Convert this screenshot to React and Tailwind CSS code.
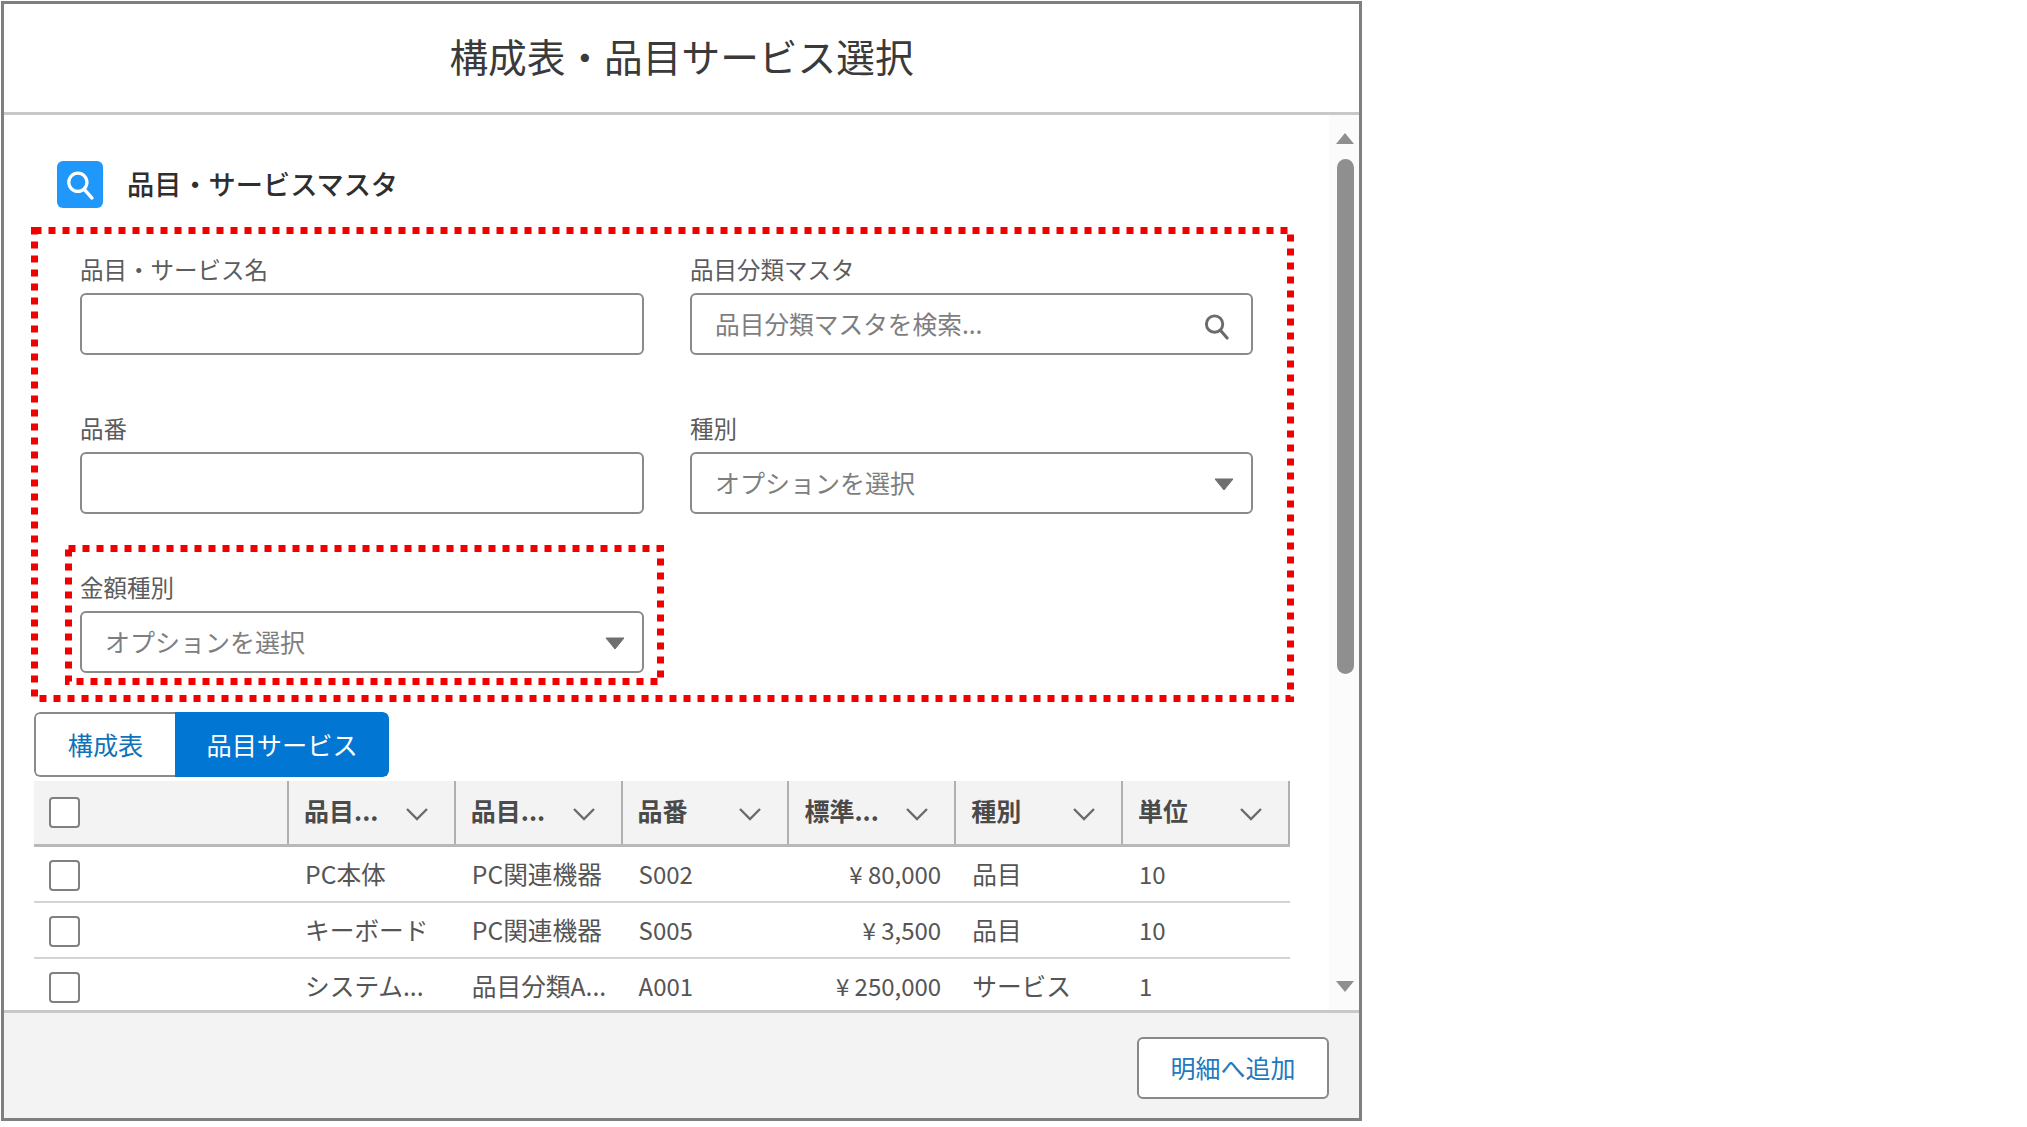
const rows = [
  { name: "PC本体", group: "PC関連機器", code: "S002", price: "¥ 80,000", kind: "品目", unit: "10" },
  { name: "キーボード", group: "PC関連機器", code: "S005", price: "¥ 3,500", kind: "品目", unit: "10" },
  { name: "システム...", group: "品目分類A...", code: "A001", price: "¥ 250,000", kind: "サービス", unit: "1" },
];

const columns = ["品目...", "品目...", "品番", "標準...", "種別", "単位"];

function Chevron() {
  return (
    <svg width="24" height="14" viewBox="0 0 24 14" fill="none" className="shrink-0 mt-[3px]">
      <path d="M2 2 L12 12 L22 2" stroke="#6b6b6b" strokeWidth="2.4" />
    </svg>
  );
}

function Caret() {
  return (
    <svg width="20" height="13" viewBox="0 0 20 13" className="shrink-0 mt-[3px]">
      <path d="M1 1 H19 L10 12 Z" fill="#6f6f6f" stroke="#6f6f6f" strokeWidth="1" strokeLinejoin="round" />
    </svg>
  );
}

function Magnifier({ size, color, className }) {
  return (
    <svg width={size} height={size} viewBox="0 0 28 28" fill="none" className={className}>
      <circle cx="12" cy="11.5" r="8.5" stroke={color} strokeWidth="3" />
      <path d="M18 18 L25 26" stroke={color} strokeWidth="3.2" strokeLinecap="round" />
    </svg>
  );
}

function Checkbox() {
  return <div className="w-[31px] h-[31px] bg-white border-2 border-[#808080] rounded-[4px]" />;
}

function DottedBox({ className }) {
  return (
    <svg className={`absolute pointer-events-none overflow-visible ${className}`}>
      <rect
        x="3.5"
        y="3.5"
        fill="none"
        stroke="#f20000"
        strokeWidth="7"
        strokeDasharray="7 7"
        style={{ width: "calc(100% - 7px)", height: "calc(100% - 7px)" }}
      />
    </svg>
  );
}

function Field({ label, children }) {
  return (
    <div className="flex flex-col">
      <label className="h-[30px] mb-[9px] text-[23.5px] leading-[30px] text-[#5c5c5c]">{label}</label>
      {children}
    </div>
  );
}

function TextInput({ placeholder, icon }) {
  return (
    <div className="h-[62px] flex items-center bg-white border-2 border-[#8a8a8a] rounded-[6px] pl-[23px] pr-[21px]">
      <input
        placeholder={placeholder}
        className="flex-1 min-w-0 bg-transparent outline-none text-[24.7px] placeholder:text-[#7e7e7e]"
      />
      {icon}
    </div>
  );
}

function SelectBox() {
  return (
    <div className="h-[62px] flex items-center justify-between bg-white border-2 border-[#8a8a8a] rounded-[6px] pl-[23px] pr-[17px]">
      <span className="text-[25px] text-[#7e7e7e]">オプションを選択</span>
      <Caret />
    </div>
  );
}

export default function App() {
  return (
    <div className="w-screen h-screen overflow-hidden bg-white pl-px pt-px font-['Noto_Sans_CJK_JP',sans-serif]">
      <div className="w-[1361px] h-[1120px] flex flex-col border-[3px] border-[#7f7f7f] bg-white">
        <header className="h-[111px] shrink-0 flex items-center justify-center border-b-[3px] border-[#c8c8c8] pb-[6px]">
          <h1 className="text-[38.7px] leading-none text-[#3a3a3a]">構成表・品目サービス選択</h1>
        </header>

        <div className="flex-1 min-h-0 flex overflow-hidden">
          <div className="flex-1 min-w-0 pl-[28px]">
            <div className="flex items-center mt-[46px] ml-[25px] gap-[24px]">
              <div className="w-[46px] h-[47px] flex items-center justify-center rounded-[6px] bg-[#1f97fb]">
                <Magnifier size={30} color="#fff" />
              </div>
              <h2 className="text-[27.2px] font-medium text-[#2e2e2e] -mt-[3px]">品目・サービスマスタ</h2>
            </div>

            <div className="relative w-[1263px] h-[475px] -ml-px mt-[19px] pl-[49px] pt-[27px]">
              <DottedBox className="inset-0 w-full h-full" />
              <div className="grid grid-cols-[564px_563px] gap-x-[46px] gap-y-[58px]">
                <Field label="品目・サービス名">
                  <TextInput />
                </Field>
                <Field label="品目分類マスタ">
                  <TextInput
                    placeholder="品目分類マスタを検索..."
                    icon={<Magnifier size={27} color="#6b6b6b" className="shrink-0 mt-[5px]" />}
                  />
                </Field>
                <Field label="品番">
                  <TextInput />
                </Field>
                <Field label="種別">
                  <SelectBox />
                </Field>
                <div className="relative">
                  <DottedBox className="-left-[15px] -top-[27px] w-[599px] h-[140px]" />
                  <Field label="金額種別">
                    <SelectBox />
                  </Field>
                </div>
              </div>
            </div>

            <div className="flex w-[355px] h-[65px] mt-[10px] ml-[2px] text-[25.2px] rounded-[6px] overflow-hidden">
              <div className="w-[141px] flex items-center justify-center bg-white text-[#1072b8] border-2 border-r-0 border-[#8a8a8a] rounded-l-[6px]">
                構成表
              </div>
              <div className="flex-1 flex items-center justify-center bg-[#0176d3] text-white rounded-r-[6px]">
                品目サービス
              </div>
            </div>

            <div className="w-[1256px] mt-[4px] ml-[2px]">
              <div className="grid grid-cols-[255px_repeat(6,166.8px)] h-[66px] bg-[#f3f3f3] border-b-[3px] border-[#b8b8b8]">
                <div className="flex items-center pl-[15px] border-r-2 border-[#b0b0b0]">
                  <Checkbox />
                </div>
                {columns.map((col, i) => (
                  <div
                    key={i}
                    className="flex items-center justify-between pl-[15px] pr-[25px] border-r-2 border-[#b0b0b0]"
                  >
                    <span className="text-[25px] font-bold text-[#4a4a4a] -mt-[4px]">{col}</span>
                    <Chevron />
                  </div>
                ))}
              </div>
              {rows.map((row) => (
                <div
                  key={row.code}
                  className="grid grid-cols-[255px_repeat(6,166.8px)] h-[56px] items-center text-[24.7px] text-[#555] border-b-2 border-[#d4d4d4]"
                >
                  <div className="pl-[15px] pt-[3px]">
                    <Checkbox />
                  </div>
                  <div className="pl-[16px] whitespace-nowrap">{row.name}</div>
                  <div className="pl-[16px] whitespace-nowrap">{row.group}</div>
                  <div className="pl-[16px] text-[24px]">{row.code}</div>
                  <div className="pr-[15px] text-right whitespace-nowrap text-[24px]">{row.price}</div>
                  <div className="pl-[16px] whitespace-nowrap">{row.kind}</div>
                  <div className="pl-[16px] text-[24px]">{row.unit}</div>
                </div>
              ))}
            </div>
          </div>

          <div className="w-[30px] shrink-0 flex flex-col items-center bg-[#fbfbfb] pt-[18px] pl-[2px]">
            <svg width="18" height="11" viewBox="0 0 18 11">
              <path d="M9 0 L18 11 H0 Z" fill="#8f8f8f" />
            </svg>
            <div className="w-[17px] h-[515px] mt-[15px] rounded-full bg-[#8f8f8f]" />
            <svg width="18" height="11" viewBox="0 0 18 11" className="mt-[307px]">
              <path d="M0 0 H18 L9 11 Z" fill="#8f8f8f" />
            </svg>
          </div>
        </div>

        <footer className="h-[108px] shrink-0 flex items-start justify-end bg-[#f3f3f3] border-t-[3px] border-[#c8c8c8] pt-[24px] pr-[30px]">
          <button className="w-[192px] h-[62px] bg-white border-2 border-[#888] rounded-[6px] text-[25px] text-[#2279bd]">
            明細へ追加
          </button>
        </footer>
      </div>
    </div>
  );
}
